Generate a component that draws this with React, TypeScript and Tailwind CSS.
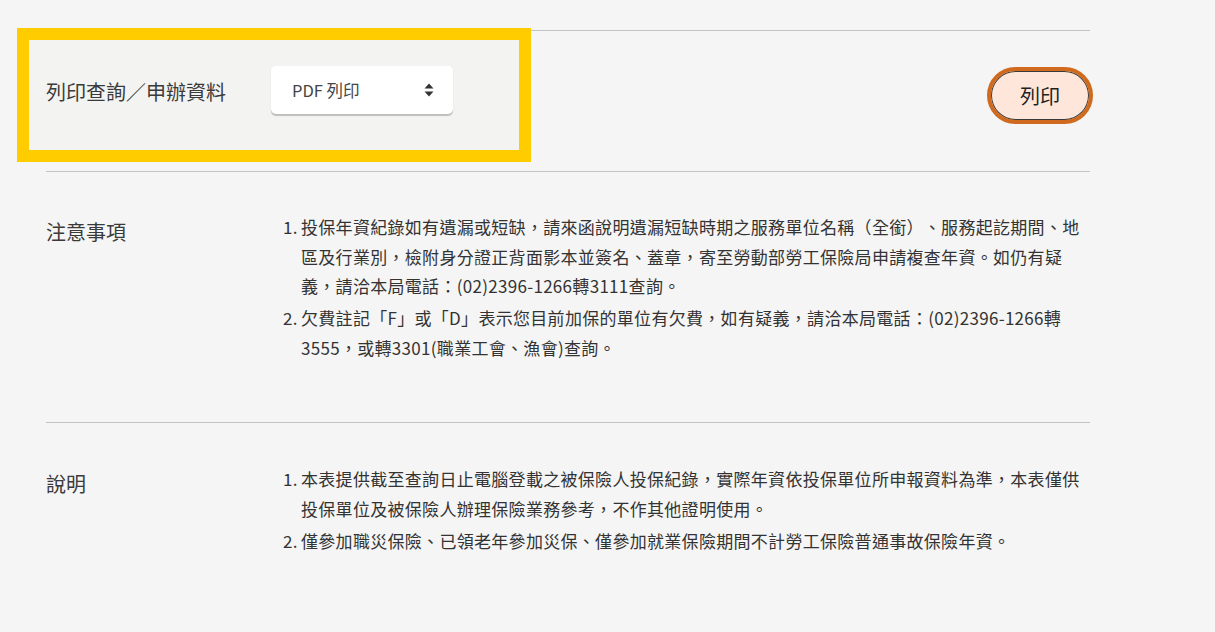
import React from 'react';

const notes = [
  '投保年資紀錄如有遺漏或短缺，請來函說明遺漏短缺時期之服務單位名稱（全銜）、服務起訖期間、地區及行業別，檢附身分證正背面影本並簽名、蓋章，寄至勞動部勞工保險局申請複查年資。如仍有疑義，請洽本局電話：(02)2396-1266轉3111查詢。',
  '欠費註記「F」或「D」表示您目前加保的單位有欠費，如有疑義，請洽本局電話：(02)2396-1266轉3555，或轉3301(職業工會、漁會)查詢。',
];

const explain = [
  '本表提供截至查詢日止電腦登載之被保險人投保紀錄，實際年資依投保單位所申報資料為準，本表僅供投保單位及被保險人辦理保險業務參考，不作其他證明使用。',
  '僅參加職災保險、已領老年參加災保、僅參加就業保險期間不計勞工保險普通事故保險年資。',
];

const NumberedList: React.FC<{ items: string[] }> = ({ items }) => (
  <ol className="flex-1 flex flex-col gap-[2.5px] text-[17px] tracking-[0.3px] leading-[29.5px] text-[#333333] [text-spacing-trim:space-all]">
    {items.map((text, i) => (
      <li key={i} className="flex">
        <span className="w-[18px] shrink-0">{i + 1}.</span>
        <span className="flex-1">{text}</span>
      </li>
    ))}
  </ol>
);

const SortIcon = () => (
  <svg width="10" height="14" viewBox="0 0 10 14" fill="#333333">
    <path d="M5 0.5 L9.5 5.5 H0.5 Z" />
    <path d="M5 13.5 L9.5 8.5 H0.5 Z" />
  </svg>
);

export default function App() {
  return (
    <div
      className="min-h-screen bg-[#f5f5f5] pt-[30px]"
      style={{ fontFamily: '"Noto Sans CJK TC", "Noto Sans", sans-serif' }}
    >
      <div className="ml-[46px] w-[1044px]">
        {/* print row */}
        <div className="h-[142px] border-y border-[#c4c4c4] flex items-start justify-between">
          <div className="mt-[9px] -ml-[17px] w-[490px] h-[110px] bg-[#f3f3f1] outline-[12px] outline-solid outline-[#ffcc00] pl-[17px] pt-[26px] flex items-start">
            <div className="w-[225px] text-[20px] text-[#3a3a3a] leading-[30px] pt-[11px]">
              列印查詢／申辦資料
            </div>
            <div className="w-[182px] h-[48px] bg-white rounded-[5px] shadow-[0_2px_1px_rgba(0,0,0,0.22)] flex items-center justify-between pl-[21px] pr-[19px]">
              <span className="text-[16.5px] text-[#444444]">PDF 列印</span>
              <SortIcon />
            </div>
          </div>
          <button className="mt-[36px] -mr-[3px] w-[106px] h-[57px] rounded-full border-[4px] border-[#cf6a1f] bg-[#fee6da] shadow-[inset_0_0_0_1px_#3a3a3a] text-[20px] text-[#222222] flex items-center justify-center">
            列印
          </button>
        </div>

        {/* notes */}
        <div className="flex pt-[40px] pb-[60px] border-b border-[#c4c4c4]">
          <div className="w-[237px] shrink-0 text-[20px] leading-[30px] pt-[5px] text-[#3a3a3a]">注意事項</div>
          <NumberedList items={notes} />
        </div>

        {/* explanation */}
        <div className="flex pt-[41px] pb-[40px]">
          <div className="w-[237px] shrink-0 text-[20px] leading-[30px] pt-[5px] text-[#3a3a3a]">說明</div>
          <NumberedList items={explain} />
        </div>
      </div>
    </div>
  );
}
